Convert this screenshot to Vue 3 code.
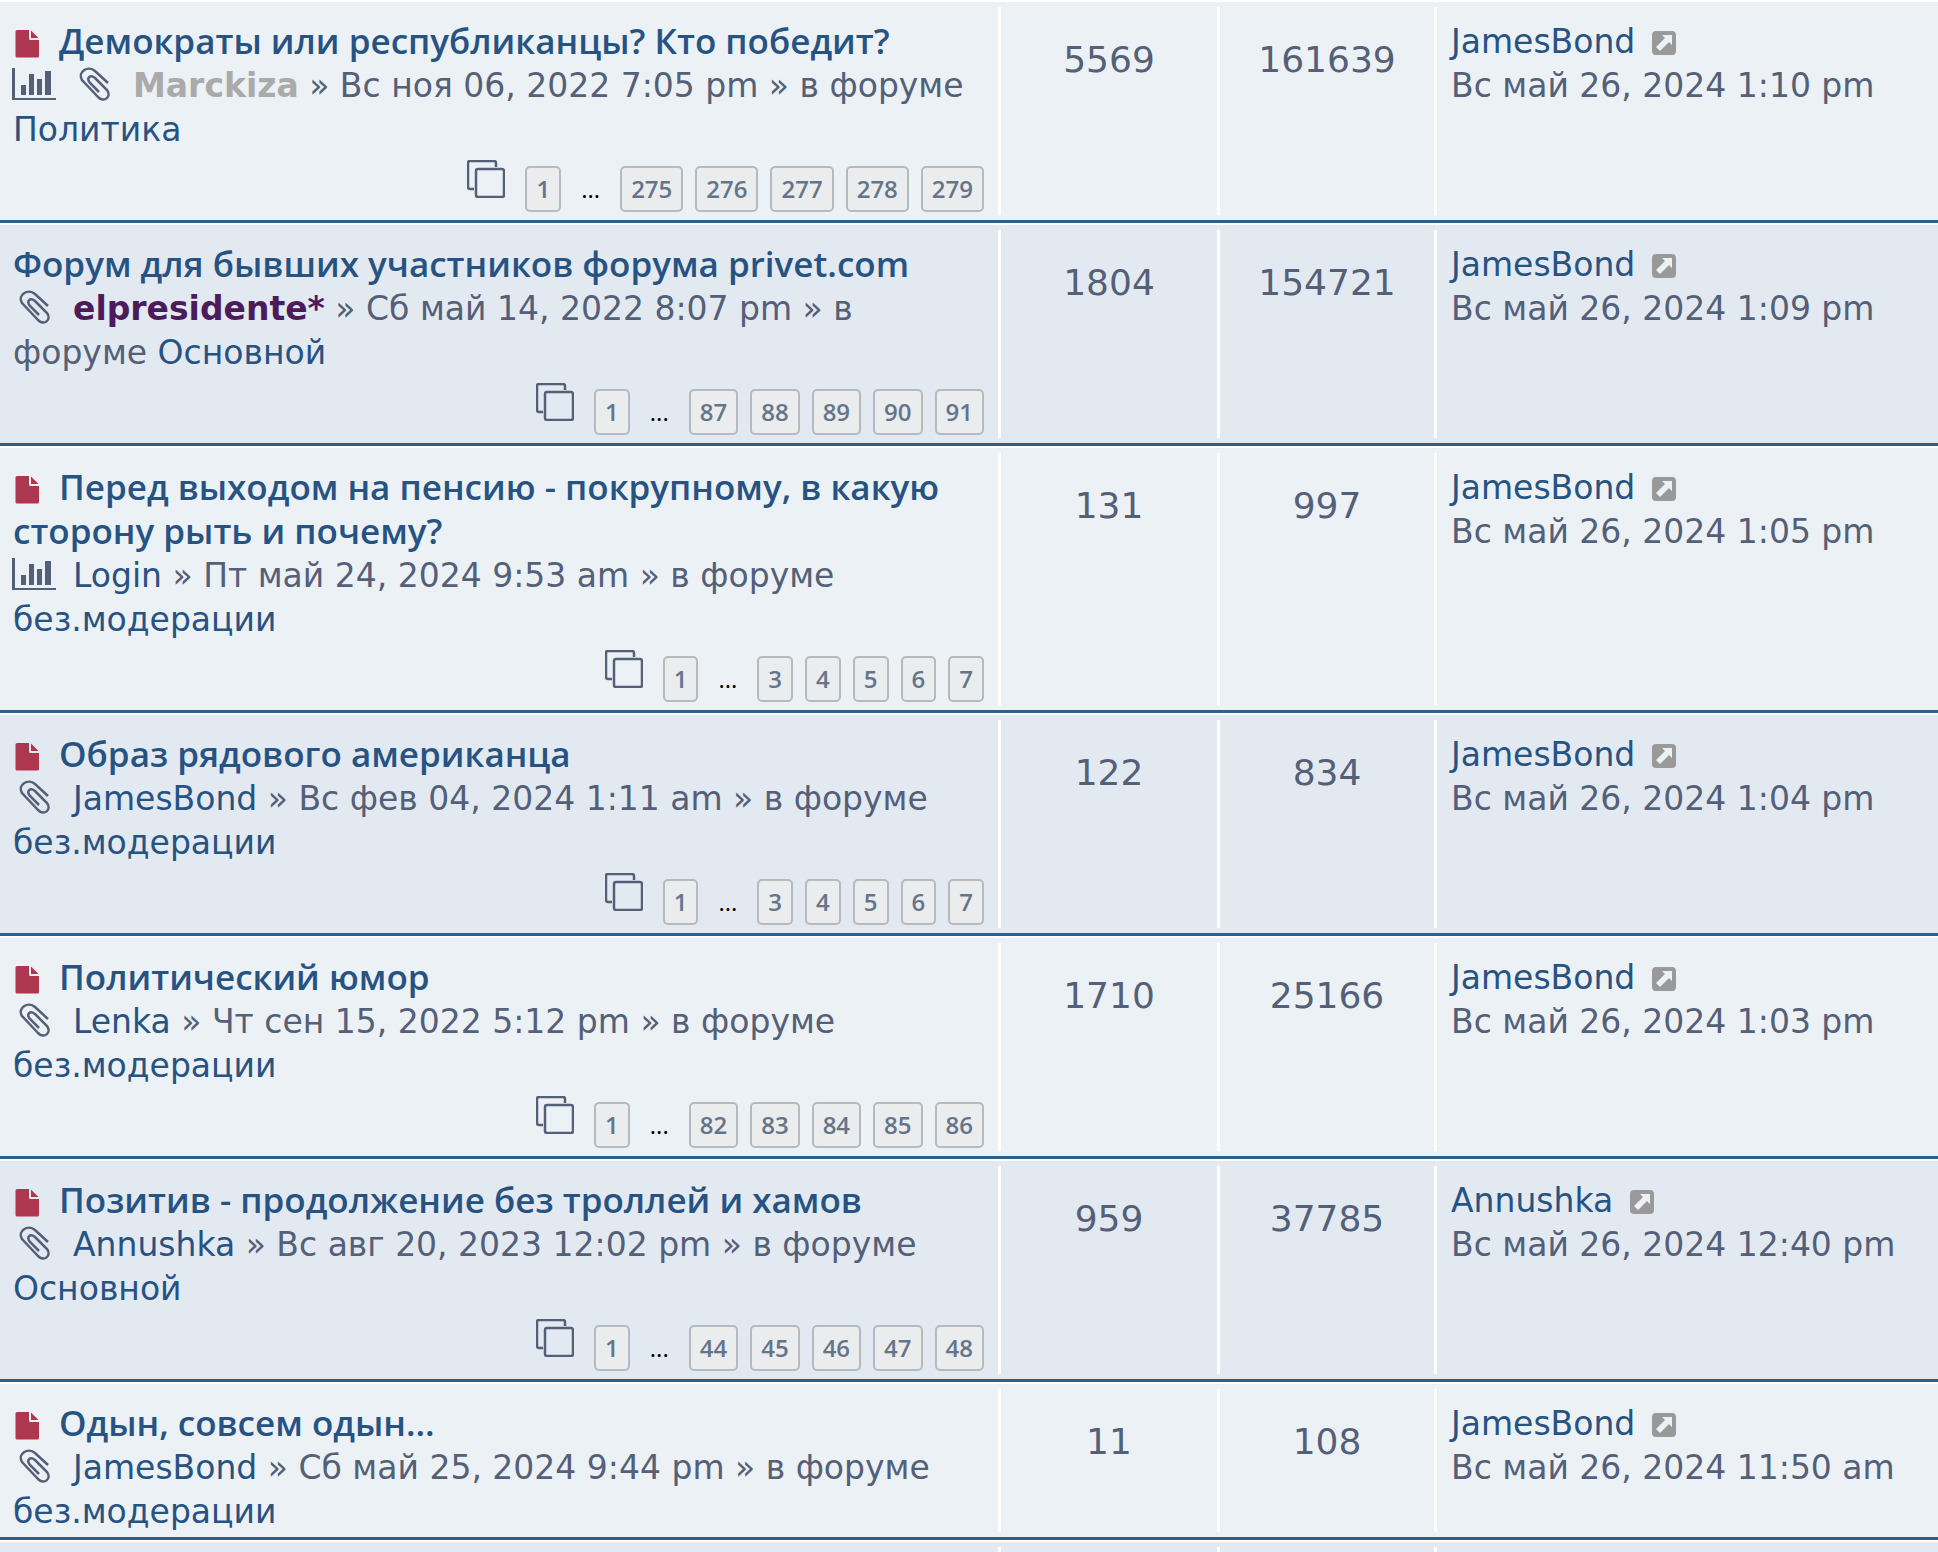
<script setup>
import { ref } from 'vue'

// Список тем форума
const topics = ref([
  {
    id: 1,
    title: 'Демократы или республиканцы? Кто победит?',
    unapproved: true,
    poll: true,
    attach: true,
    author: 'Marckiza',
    authorClass: 'guest',
    date: 'Вс ноя 06, 2022 7:05 pm',
    forum: 'Политика',
    pages: [275, 276, 277, 278, 279],
    replies: 5569,
    views: 161639,
    lastUser: 'JamesBond',
    lastDate: 'Вс май 26, 2024 1:10 pm'
  },
  {
    id: 2,
    title: 'Форум для бывших участников форума privet.com',
    attach: true,
    author: 'elpresidente*',
    authorClass: 'admin',
    date: 'Сб май 14, 2022 8:07 pm',
    forum: 'Основной',
    pages: [87, 88, 89, 90, 91],
    replies: 1804,
    views: 154721,
    lastUser: 'JamesBond',
    lastDate: 'Вс май 26, 2024 1:09 pm'
  },
  {
    id: 3,
    title: 'Перед выходом на пенсию - покрупному, в какую сторону рыть и почему?',
    unapproved: true,
    poll: true,
    author: 'Login',
    date: 'Пт май 24, 2024 9:53 am',
    forum: 'без.модерации',
    pages: [3, 4, 5, 6, 7],
    replies: 131,
    views: 997,
    lastUser: 'JamesBond',
    lastDate: 'Вс май 26, 2024 1:05 pm'
  },
  {
    id: 4,
    title: 'Образ рядового американца',
    unapproved: true,
    attach: true,
    author: 'JamesBond',
    date: 'Вс фев 04, 2024 1:11 am',
    forum: 'без.модерации',
    pages: [3, 4, 5, 6, 7],
    replies: 122,
    views: 834,
    lastUser: 'JamesBond',
    lastDate: 'Вс май 26, 2024 1:04 pm'
  },
  {
    id: 5,
    title: 'Политический юмор',
    unapproved: true,
    attach: true,
    author: 'Lenka',
    date: 'Чт сен 15, 2022 5:12 pm',
    forum: 'без.модерации',
    pages: [82, 83, 84, 85, 86],
    replies: 1710,
    views: 25166,
    lastUser: 'JamesBond',
    lastDate: 'Вс май 26, 2024 1:03 pm'
  },
  {
    id: 6,
    title: 'Позитив - продолжение без троллей и хамов',
    unapproved: true,
    attach: true,
    author: 'Annushka',
    date: 'Вс авг 20, 2023 12:02 pm',
    forum: 'Основной',
    pages: [44, 45, 46, 47, 48],
    replies: 959,
    views: 37785,
    lastUser: 'Annushka',
    lastDate: 'Вс май 26, 2024 12:40 pm'
  },
  {
    id: 7,
    title: 'Одын, совсем одын...',
    unapproved: true,
    attach: true,
    author: 'JamesBond',
    date: 'Сб май 25, 2024 9:44 pm',
    forum: 'без.модерации',
    pages: [],
    replies: 11,
    views: 108,
    lastUser: 'JamesBond',
    lastDate: 'Вс май 26, 2024 11:50 am'
  }
])
</script>

<template>
  <table class="topics">
    <tbody>
      <tr v-for="topic in topics" :key="topic.id" class="row">
        <td class="topic">
          <div class="title">
            <svg v-if="topic.unapproved" class="icon icon-file" viewBox="0 0 28 28">
              <path d="M4 0H16V8.500Q16 10 17.500 10H26V26Q26 27.500 24.500 27.500H4Q2.500 27.500 2.500 26V1.500Q2.500 0 4 0Z" />
              <path d="M18 0.500L25.500 8H18Z" />
            </svg>
            <a href="#">{{ topic.title }}</a>
          </div>
          <div class="meta">
            <svg v-if="topic.poll" class="icon" viewBox="0 0 42 34">
              <path d="M-1 1H2V31H43V33H-1ZM8 18H13V28H8ZM16 7H21V28H16ZM24 12H29V28H24ZM32 4H38V28H32Z" />
            </svg>
            <svg v-if="topic.attach" class="icon icon-clip" viewBox="0 0 42 34">
              <path d="M35 16L22 4C15 -2 4 5 9 13L25 30C31 36 39 30 34 23L22 11C17 7 13 11 17 16L26 25" />
            </svg>
            <a href="#" :class="topic.authorClass">{{ topic.author }}</a>
            » {{ topic.date }} » в форуме
            <a href="#">{{ topic.forum }}</a>
          </div>
          <div v-if="topic.pages.length" class="pagination">
            <svg class="icon-pages" viewBox="0 0 38 38">
              <path d="M7 29H3Q1 29 1 27V3Q1 1 3 1H27Q29 1 29 3V7" />
              <rect x="9" y="9" width="28" height="28" rx="2" />
            </svg>
            <a href="#" class="page">1</a>
            <span class="ellipsis">...</span>
            <a v-for="page in topic.pages" :key="page" href="#" class="page">{{ page }}</a>
          </div>
        </td>
        <td class="count">{{ topic.replies }}</td>
        <td class="count">{{ topic.views }}</td>
        <td class="last">
          <a href="#">{{ topic.lastUser }}</a>
          <a href="#" class="goto" aria-label="Перейти к последнему сообщению">
            <svg viewBox="0 0 24 24">
              <rect width="24" height="24" rx="4" />
              <path d="M10 4H20V14L17 11L8 20L4 16L13 7Z" />
            </svg>
          </a>
          <div>{{ topic.lastDate }}</div>
        </td>
      </tr>
      <!-- начало следующей строки -->
      <tr class="row row-next">
        <td></td>
        <td></td>
        <td></td>
        <td></td>
      </tr>
    </tbody>
  </table>
</template>

<style>
body {
  margin: 0;
  background-color: #ecf1f5;
}
</style>

<style scoped>
.topics,
.topics tbody {
  display: block;
}

.topics {
  font-family: Verdana, "DejaVu Sans", sans-serif;
  font-size: 33px;
  line-height: 44px;
  color: #545f78;
}

.row {
  display: grid;
  grid-template-columns: minmax(0, 1fr) 219px 217px 504px;
  padding: 5px 0;
  border-top: 2px solid #fff;
  border-bottom: 3px solid #306088;
  background-color: #ecf1f5;
}

.row:nth-child(even) {
  background-color: #e3e9f1;
}

td {
  padding: 0;
}

td + td {
  border-left: 3px solid #fff;
}

a {
  color: #275383;
  text-decoration: none;
}

a:hover {
  color: #d31141;
  text-decoration: underline;
}

/* Тема */
.topic {
  padding: 12px 14px 0 13px;
}

.title {
  font-family: "Trebuchet MS", "Open Sans", sans-serif;
  font-size: 35px;
  font-weight: 600;
}

.meta {
  padding-top: 1px;
  margin-bottom: -2px;
}

.icon {
  width: 42px;
  height: 34px;
  margin-right: 18px;
  vertical-align: -4px;
  overflow: visible;
  fill: #545f78;
}

.icon-file {
  width: 28px;
  height: 28px;
  fill: #ad374f;
}

.icon-clip {
  fill: none;
  stroke: #545f78;
  stroke-width: 2.5;
}

.guest {
  color: #aaa;
  font-weight: 700;
}

.admin {
  color: #4b1b5c;
  font-weight: 700;
}

/* Страницы темы */
.pagination {
  display: flex;
  align-items: flex-end;
  justify-content: flex-end;
  gap: 12px;
  padding: 10px 0 3px;
  font-family: "Open Sans", sans-serif;
  font-size: 24px;
  font-weight: 600;
  line-height: 42px;
}

.icon-pages {
  width: 38px;
  height: 38px;
  margin: 0 8px 14px 0;
  fill: none;
  stroke: #545f78;
  stroke-width: 2.5;
}

.page {
  padding: 0 9px;
  border: 2px solid #b4babd;
  border-radius: 5px;
  background-color: #ebecee;
  color: #64758a;
}

.ellipsis {
  padding: 2px 8px;
  color: #000;
  font-weight: 400;
}

/* Ответы и просмотры */
.count {
  padding-top: 13px;
  font-size: 36px;
  line-height: 80px;
  text-align: center;
}

/* Последнее сообщение */
.last {
  padding: 13px 0 0 14px;
}

.goto {
  margin-left: 17px;
}

.goto svg {
  width: 24px;
  height: 24px;
  vertical-align: -2px;
  fill: #999;
}

.goto path {
  fill: #ecf1f5;
}

.row-next {
  border-bottom: 0;
  padding-bottom: 0;
}

.row-next td {
  min-height: 5px;
}
</style>
